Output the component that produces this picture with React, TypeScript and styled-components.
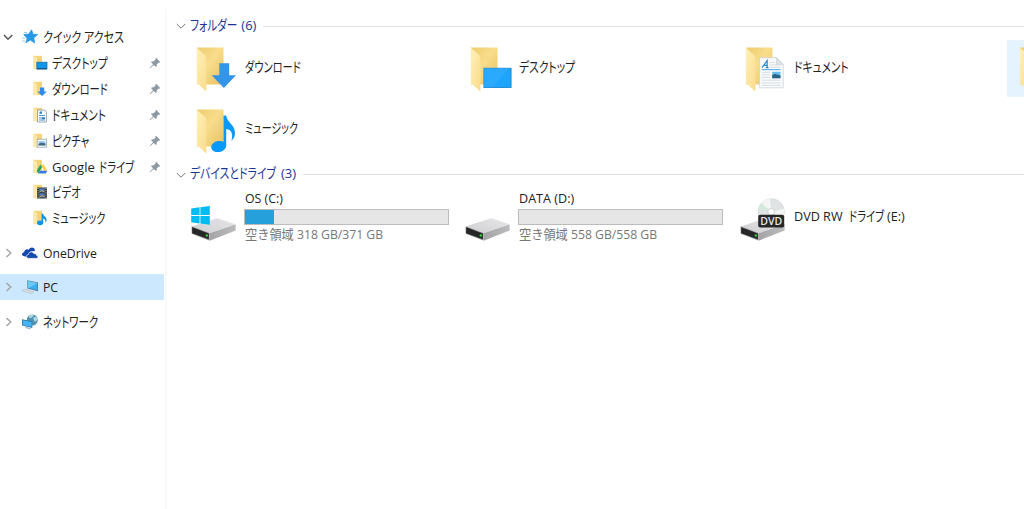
import React from 'react';
import styled, { createGlobalStyle } from 'styled-components';

const GlobalStyle = createGlobalStyle`
    body {
        margin: 0;
        background: #ffffff;
        overflow: hidden;
    }
`

const Window = styled.div`
    width: 1024px;
    height: 509px;
    display: flex;
    overflow: hidden;
    background: #ffffff;
    color: #222222;
    font-family: "Open Sans", "Noto Sans CJK JP", sans-serif;
    font-size: 13px;
    line-height: 18px;
`

const Sidebar = styled.nav`
    width: 164px;
    flex: none;
    padding-top: 24.4px;
`

const Divider = styled.div`
    width: 2px;
    flex: none;
    margin: 9px 0 0 1px;
    background: #f8f8f8;
`

const Main = styled.main`
    flex: 1;
    min-width: 0;
    padding: 17px 0 0 9px;
`

const NavRow = styled.div<{ $active?: boolean; $gap?: number }>`
    height: 25.86px;
    margin-top: ${p => p.$gap || 0}px;
    display: flex;
    align-items: center;
    background: ${p => (p.$active ? '#cce8ff' : 'transparent')};
`

const NavArrow = styled.svg`
    width: 10px;
    height: 10px;
    flex: none;
    margin: 0 9px 0 3px;
    fill: none;
    stroke-width: 1.5;
`

const SmallIcon = styled.svg<{ $nested?: boolean }>`
    width: 16px;
    height: 16px;
    flex: none;
    margin-left: ${p => (p.$nested ? 32 : 0)}px;
    margin-right: ${p => (p.$nested ? 4 : 5)}px;
    overflow: visible;
`

const Pin = styled.svg`
    width: 12px;
    height: 12px;
    flex: none;
    margin-left: auto;
    margin-right: 3px;
`

const TextBox = styled.span<{ $width: number; $lift: number }>`
    display: block;
    flex: none;
    width: ${p => p.$width}px;
    margin: ${p => -p.$lift}px 0 ${p => p.$lift}px;
    white-space: pre;
`

// the kana are set narrower than the latin letters
const Kana = styled.span<{ $squeeze: number; $shift: number }>`
    display: inline-block;
    margin-left: ${p => p.$shift}px;
    transform: scaleX(${p => p.$squeeze});
    transform-origin: left center;
    font-family: "Noto Sans CJK JP", sans-serif;
    font-feature-settings: "palt";
    font-size: 14px;
    line-height: 18px;
`

const Latin = styled.span<{ $squeeze?: number; $shift?: number }>`
    display: inline-block;
    margin-left: ${p => p.$shift || 0}px;
    transform: scaleX(${p => p.$squeeze || 1});
    transform-origin: left center;
`

const SectionHead = styled.div<{ $gap?: number }>`
    height: 18px;
    margin-top: ${p => p.$gap || 0}px;
    display: flex;
    align-items: center;
    color: #1e3296;
`

const HeadArrow = styled.svg`
    width: 10px;
    height: 10px;
    flex: none;
    margin-right: 4px;
    fill: none;
    stroke: #777777;
`

const HeadLine = styled.div`
    height: 1px;
    flex: 1;
    background: #e2e2e2;
`

const Tiles = styled.div`
    display: grid;
    grid-template-columns: repeat(4, 274.4px);
    row-gap: 4.5px;
    margin: 5px 0 0 7.5px;
`

const Tile = styled.div<{ $hover?: boolean }>`
    height: 57px;
    display: flex;
    align-items: center;
    gap: 5px;
    padding-left: 4.5px;
    background: ${p => (p.$hover ? '#e5f3ff' : 'transparent')};
`

const BigIcon = styled.svg`
    width: 52px;
    height: 56px;
    flex: none;
    margin-top: -1px;
`

const DriveInfo = styled.div`
    width: 203.5px;
    display: flex;
    flex-direction: column;
`

const Bar = styled.div`
    height: 16px;
    box-sizing: border-box;
    margin-left: -1px;
    border: 1px solid #bcbcbc;
    background: #e6e6e6;
`

const BarFill = styled.div`
    height: 14px;
    background: #26a0da;
`

const FreeSpace = styled.div`
    color: #777777;
    white-space: pre;
    line-height: 19px;
    transform: scaleX(0.938);
    transform-origin: left center;
`

const SmallFolder = () => (
    <>
        <path d="M1.5 .8H10V14H1.5z" fill="#f4d47b" />
        <path d="M1.5 .8L5 3V15L1.5 13z" fill="#ffe9a9" />
    </>
)

const overlays: Record<string, React.ReactNode> = {
    desktop: <><rect x="4.8" y="7.2" width="10.2" height="6.8" fill="#1296ea" stroke="#1668a8" strokeWidth=".7" /><path d="M5 13.8h10" stroke="#123f66" strokeWidth=".9" /></>,
    download: <path d="M8 6.5h4.2v4h2.6L10.1 15 5.4 10.5H8z" fill="#2f8be6" />,
    document: <><path d="M5.5 3h7l2 2v10h-9z" fill="#f6fafc" stroke="#8798a2" strokeWidth=".8" /><path d="M7 6h3M7 8.5h6M7 11h3M7 13h6" stroke="#5a9ccc" /><path d="M10 10.2h3v2h-3zM8 4.5h2v2H8z" fill="#2d7fc1" /></>,
    picture: <><rect x="5.2" y="6.2" width="9.5" height="8" fill="#fff" stroke="#93a4b1" strokeWidth=".8" /><path d="M6.5 8h7v4.5h-7z" fill="#9bd0f3" /><path d="M6.5 11l2.5-1.5 4.5 1v2h-7z" fill="#456b80" /></>,
    gdrive: <><path d="M8.4 5.5h3.2l3.8 6.2h-3.3z" fill="#ffcf48" /><path d="M8.4 5.5l1.6 2.8-3.7 6.2-1.6-2.7z" fill="#1fa463" /><path d="M8.1 11.7h7.3l-1.7 2.8H6.3z" fill="#3b78e7" /></>,
    video: <><path d="M5 3.5h10V14.5H5z" fill="#303030" /><path d="M7.3 4.2h5.4v4H7.3zM7.3 9.2h5.4v4.3H7.3z" fill="#4c79ba" /><path d="M7.3 8.2l2-1.7 3.4 1.5M7.3 13.2l2.5-1.5 2.9 1" stroke="#d3a15a" fill="none" /><path d="M6 4v10M14 4v10" stroke="#ddd" strokeDasharray="1 1.2" /></>,
    music: <><ellipse cx="8.1" cy="12.8" rx="3.1" ry="2.4" fill="#0c93ec" /><path d="M9.6 3.5h1.5c.2 2.8 3.7 3.2 3.5 6.6 0 1.1-.5 2-1.1 2.5.4-2.5-.9-3.6-2.3-4.1V13H9.6z" fill="#0c93ec" /></>,
}

const BigFolder = ({ id }: { id: string }) => (
    <>
        <defs>
            <linearGradient id={`${id}-back`} x1="0" y1="0" x2="1" y2="1">
                <stop offset="0" stopColor="#eecb6c" />
                <stop offset=".45" stopColor="#f8dd8b" />
                <stop offset="1" stopColor="#e9c060" />
            </linearGradient>
            <linearGradient id={`${id}-flap`} x1="0" y1="0" x2="1" y2="1">
                <stop offset="0" stopColor="#fff0b9" />
                <stop offset="1" stopColor="#f9dc8c" />
            </linearGradient>
        </defs>
        <path d="M5 7.5H31.5V44.5H5z" fill={`url(#${id}-back)`} />
        <path d="M4.8 7.7L13 14.8Q14.4 16 14.4 18V51.4L5.7 43.8Q4.8 43 4.8 42z" fill={`url(#${id}-flap)`} />
    </>
)

const Drive = ({ id }: { id: string }) => (
    <>
        <defs>
            <linearGradient id={id} x1="0" y1="0" x2="1" y2="0">
                <stop offset="0" stopColor="#a4a4a6" />
                <stop offset="1" stopColor="#bcbcbf" />
            </linearGradient>
            <linearGradient id={`${id}-top`} x1="0" y1="1" x2="1" y2="0">
                <stop offset="0" stopColor="#cfcfd2" />
                <stop offset="1" stopColor="#e6e6e8" />
            </linearGradient>
        </defs>
        <path d="M17.3 44L43.7 35.3V41.5L18.3 51.4H17.3z" fill={`url(#${id})`} />
        <path d="M-.3 37.5L24 29.4Q25 29.1 26 29.4L43.5 35.2 17.3 44.4z" fill={`url(#${id}-top)`} />
        <path d="M-.4 37.2L17.3 44V51.4L.4 45.1Q-.4 44.8-.4 44z" fill="#8f8f91" />
        <path d="M.2 38.2L16.8 44.6V50.3L.2 44.2z" fill="#262626" />
        <circle cx="14.8" cy="46.5" r="1.2" fill="#2fd43c" />
    </>
)

type LabelProps = {
    width: number;
    kana?: string;
    pre?: string;
    post?: string;
    squeeze?: number;
    latin?: number;
    kanaShift?: number;
    shift?: number;
    lift?: number;
}

const Label = ({ width, kana, pre, post, squeeze = 0.75, latin = 1, kanaShift = 0, shift = 0, lift = 0 }: LabelProps) => (
    <TextBox $width={width} $lift={lift}>
        {pre && <Latin $squeeze={latin}>{pre}</Latin>}
        {kana && <Kana $squeeze={squeeze} $shift={kanaShift}>{kana}</Kana>}
        {post && <Latin $squeeze={latin} $shift={shift}>{post}</Latin>}
    </TextBox>
)

const PinIcon = () => (
    <Pin viewBox="0 0 12 12">
        <path d="M7.1 .8L11.2 4.9 10.4 5.7 9.7 5.4 7.7 7.4C8 8.6 7.6 9.5 7 10.1L4.7 7.9 1.2 11.2.8 10.8 4.1 7.3 1.9 5.1C2.6 4.5 3.5 4.1 4.6 4.3L6.6 2.4 6.3 1.6z" fill="#8c99a3" />
    </Pin>
)

const quickItems = [
    { icon: 'desktop', kana: 'デスクトップ', squeeze: 0.765, pinned: true },
    { icon: 'download', kana: 'ダウンロード', squeeze: 0.73, pinned: true },
    { icon: 'document', kana: 'ドキュメント', squeeze: 0.755, pinned: true },
    { icon: 'picture', kana: 'ピクチャ', squeeze: 0.75, pinned: true },
    { icon: 'gdrive', pre: 'Google ', kana: 'ドライブ', squeeze: 0.735, kanaShift: 1, pinned: true },
    { icon: 'video', kana: 'ビデオ', squeeze: 0.74, pinned: false },
    { icon: 'music', kana: 'ミュージック', squeeze: 0.72, pinned: false },
]

const RightArrow = () => (
    <NavArrow viewBox="0 0 10 10" stroke="#a6a6a6"><path d="M3.5 1L7.8 5 3.5 9" /></NavArrow>
)

const App = () => {
    return (
        <>
        <GlobalStyle />
        <Window>
            <Sidebar>
                <NavRow>
                    <NavArrow viewBox="0 0 10 10" stroke="#555555"><path d="M1 3L5 7.2 9.3 3" /></NavArrow>
                    <SmallIcon viewBox="0 0 16 16">
                        <path d="M9.6 .8L11 5.3 15.7 5.6 11.8 8.8 12.6 14 8.3 11 3.8 13.8 5.2 9.2 1.7 5.5 6.8 5.1z" fill="#2598e6" stroke="#2598e6" strokeWidth=".8" strokeLinejoin="round" />
                        <path d="M0 9h3.5M0 12h3M2 3.5h3" stroke="#94cdf3" />
                    </SmallIcon>
                    <Label kana="クイック アクセス" squeeze={0.79} width={90} lift={0.5} />
                </NavRow>
                {quickItems.map(item => (
                    <NavRow key={item.icon}>
                        <SmallIcon $nested viewBox="0 0 16 16">
                            <SmallFolder />
                            {overlays[item.icon]}
                        </SmallIcon>
                        <Label pre={item.pre} kana={item.kana} squeeze={item.squeeze} kanaShift={item.kanaShift} width={90} lift={0.5} />
                        {item.pinned && <PinIcon />}
                    </NavRow>
                ))}
                <NavRow $gap={8.6}>
                    <RightArrow />
                    <SmallIcon viewBox="0 0 16 16">
                        <path d="M2.4 11.3C-.8 11.2-.7 7.6 2.1 7.2 2.3 4.5 5.3 3.5 6.8 4.8 8.3 1.3 13 2.2 13 5.8L8 7 5 12z" fill="#164aad" />
                        <path d="M6.8 13.4C3.5 13.3 3.8 9.8 6.3 9.6 6.6 6.4 10.8 6 11.8 8.5 13.6 8 14.4 9.2 14.4 10.3 16.6 10.5 16.4 13.3 14.5 13.4z" fill="#164aad" stroke="#fff" strokeWidth=".7" />
                    </SmallIcon>
                    <Label pre="OneDrive" latin={0.94} width={70} />
                </NavRow>
                <NavRow $gap={8.6} $active>
                    <RightArrow />
                    <SmallIcon viewBox="0 0 16 16">
                        <path d="M5.4 1.2L16 3.5V12.3L5.4 9.6z" fill="#5c7386" />
                        <path d="M6.1 2.1L15.3 4.1V11.2L6.1 8.9z" fill="#37aef2" />
                        <path d="M6.1 2.1L15.3 4.1 7 9.1 6.1 8.9z" fill="#6cc9f8" />
                        <path d="M0 11.7L3.3 10.2 12 12.8 9.4 14.7z" fill="#d5dce0" stroke="#aab7bf" strokeWidth=".5" />
                    </SmallIcon>
                    <Label pre="PC" latin={0.94} width={70} />
                </NavRow>
                <NavRow $gap={8.6}>
                    <RightArrow />
                    <SmallIcon viewBox="0 0 16 16">
                        <circle cx="10.3" cy="6" r="5.5" fill="#5190ae" />
                        <path d="M6.5 3C8 1 10 .5 12 1L10 3.5 8 4zM11 4l3-1.5 1.5 3L13 8z" fill="#b3dce4" />
                        <path d="M0 5.3L10.3 7.3V14L0 11.6z" fill="#2879b6" />
                        <path d="M.8 6.3L9.6 8V12.9L.8 10.9z" fill="#46b4f1" />
                        <path d="M4 13l5 1.3-1 1-5-1.2z" fill="#a3b4c0" />
                    </SmallIcon>
                    <Label kana="ネットワーク" squeeze={0.745} width={90} lift={0.5} />
                </NavRow>
            </Sidebar>
            <Divider />
            <Main>
                <SectionHead>
                    <HeadArrow viewBox="0 0 10 10"><path d="M.8 3L5 7.2 9.2 3" /></HeadArrow>
                    <Label kana="フォルダー" squeeze={0.76} post="(6)" shift={-11} width={73} lift={2} />
                    <HeadLine />
                </SectionHead>
                <Tiles>
                    <Tile>
                        <BigIcon viewBox="-4 0 52 56">
                            <BigFolder id="dl" />
                            <path d="M27.3 23.3H37.2V35.3H44L31.9 47.9 19.7 35.3H27.3z" fill="#3394e8" />
                        </BigIcon>
                        <Label kana="ダウンロード" squeeze={0.73} width={90} lift={2} />
                    </Tile>
                    <Tile>
                        <BigIcon viewBox="-4 0 52 56">
                            <BigFolder id="desk" />
                            <rect x="17.9" y="28.2" width="27.2" height="19.4" fill="#1ea4fc" stroke="#1681ca" strokeWidth=".8" />
                            <path d="M18.3 28.6H43L26 47.2H18.3z" fill="#2ba9fc" />
                        </BigIcon>
                        <Label kana="デスクトップ" squeeze={0.77} width={90} lift={2} />
                    </Tile>
                    <Tile>
                        <BigIcon viewBox="-4 0 52 56">
                            <BigFolder id="doc" />
                            <path d="M18.6 17.7H35.5L42.2 24.4V47.8H18.6z" fill="#f8fafb" stroke="#cdd2d5" strokeWidth=".8" />
                            <path d="M35.5 17.7V24.4H42.2z" fill="#dde2e5" stroke="#c3c9cd" strokeWidth=".5" />
                            <path d="M21 27.7L26.2 20.5V27.7M22.8 25.3H26.2M24.8 27.7h2.7" fill="none" stroke="#2689cd" strokeWidth="1.2" />
                            <path d="M20.8 29.6H39.5" stroke="#5cb2e6" strokeWidth="1.1" />
                            <path d="M28.5 22.3H34M28.5 24.8H39.5M28.5 27.2H39.5M20.8 32.3H29M20.8 34.8H29M20.8 37.4H29M20.8 40.2H39.5M20.8 42.9H39.5M20.8 45.4H39.5" stroke="#d0d7db" strokeWidth=".8" />
                            <rect x="31.2" y="31.8" width="8.3" height="6.4" fill="#65bdf0" />
                            <path d="M31.2 35.1L34 34 39.5 35.6V38.2H31.2z" fill="#286484" />
                        </BigIcon>
                        <Label kana="ドキュメント" squeeze={0.765} width={90} lift={2} />
                    </Tile>
                    <Tile $hover>
                        <BigIcon viewBox="-4 0 52 56">
                            <BigFolder id="pic" />
                        </BigIcon>
                    </Tile>
                    <Tile>
                        <BigIcon viewBox="-4 0 52 56">
                            <BigFolder id="mus" />
                            <ellipse cx="26.7" cy="44.5" rx="7.6" ry="5.5" transform="rotate(-12 26.7 44.5)" fill="#0999fa" />
                            <path d="M31.5 13.5H34.2C35 21 43.3 22.5 43 31.5 42.9 34.5 41.5 37.2 39.4 38.7 41.4 31.5 39.4 27.7 34.2 27V44H31.5z" fill="#0999fa" />
                        </BigIcon>
                        <Label kana="ミュージック" squeeze={0.715} width={90} lift={2.5} />
                    </Tile>
                </Tiles>
                <SectionHead $gap={7}>
                    <HeadArrow viewBox="0 0 10 10"><path d="M.8 3L5 7.2 9.2 3" /></HeadArrow>
                    <Label kana="デバイスとドライブ" squeeze={0.775} post="(3)" shift={-20} width={113} lift={2} />
                    <HeadLine />
                </SectionHead>
                <Tiles>
                    <Tile>
                        <BigIcon viewBox="-4 0 52 56">
                            <Drive id="drive-c" />
                            <path d="M-.8 19.4L7.6 18.3V26.1H-.8zM8.4 18.2L17.8 17V26.1H8.4zM-.8 26.9H7.6V34.4L-.8 33.3zM8.4 26.9H17.8V35.8L8.4 34.5z" fill="#00bcf2" />
                        </BigIcon>
                        <DriveInfo>
                            <Label pre="OS (C:)" latin={0.95} width={100} lift={1.5} />
                            <Bar><BarFill style={{ width: `${(1 - 318 / 371) * 100}%` }} /></Bar>
                            <FreeSpace>空き領域 318 GB/371 GB</FreeSpace>
                        </DriveInfo>
                    </Tile>
                    <Tile>
                        <BigIcon viewBox="-4 0 52 56"><Drive id="drive-d" /></BigIcon>
                        <DriveInfo>
                            <Label pre="DATA (D:)" latin={0.97} width={100} lift={1.5} />
                            <Bar><BarFill style={{ width: `${(1 - 558 / 558) * 100}%` }} /></Bar>
                            <FreeSpace>空き領域 558 GB/558 GB</FreeSpace>
                        </DriveInfo>
                    </Tile>
                    <Tile>
                        <BigIcon viewBox="-4 0 52 56">
                            <Drive id="drive-e" />
                            <circle cx="30.2" cy="22.8" r="13.1" fill="#dfe3e3" stroke="#cbd0d0" strokeWidth=".6" />
                            <path d="M30.2 22.8L20.5 14Q24 10 29 9.8zM30.2 22.8L40.5 31Q44 26 43 20z" fill="#f3f6f5" />
                            <path d="M30.2 22.8L17.5 20Q18 17 20 15z" fill="#d1eadb" />
                            <circle cx="30.2" cy="22.8" r="3.5" fill="#f7f8f8" stroke="#c0c5c6" strokeWidth=".7" />
                            <circle cx="30.2" cy="22.8" r="1.4" fill="#ffffff" />
                            <rect x="17.2" y="25.7" width="26" height="12.8" rx="2" fill="#272727" />
                            <text x="30.2" y="36.2" textAnchor="middle" fontSize="11.5" fontWeight="600" textLength="22" lengthAdjust="spacingAndGlyphs" fontFamily="Open Sans, sans-serif" fill="#e6e6e6">DVD</text>
                        </BigIcon>
                        <Label pre="DVD RW " kana="ドライブ" post="(E:)" squeeze={0.735} kanaShift={2} latin={0.97} shift={-10} width={140} lift={2} />
                    </Tile>
                </Tiles>
            </Main>
        </Window>
        </>
    );
}

export default App;
